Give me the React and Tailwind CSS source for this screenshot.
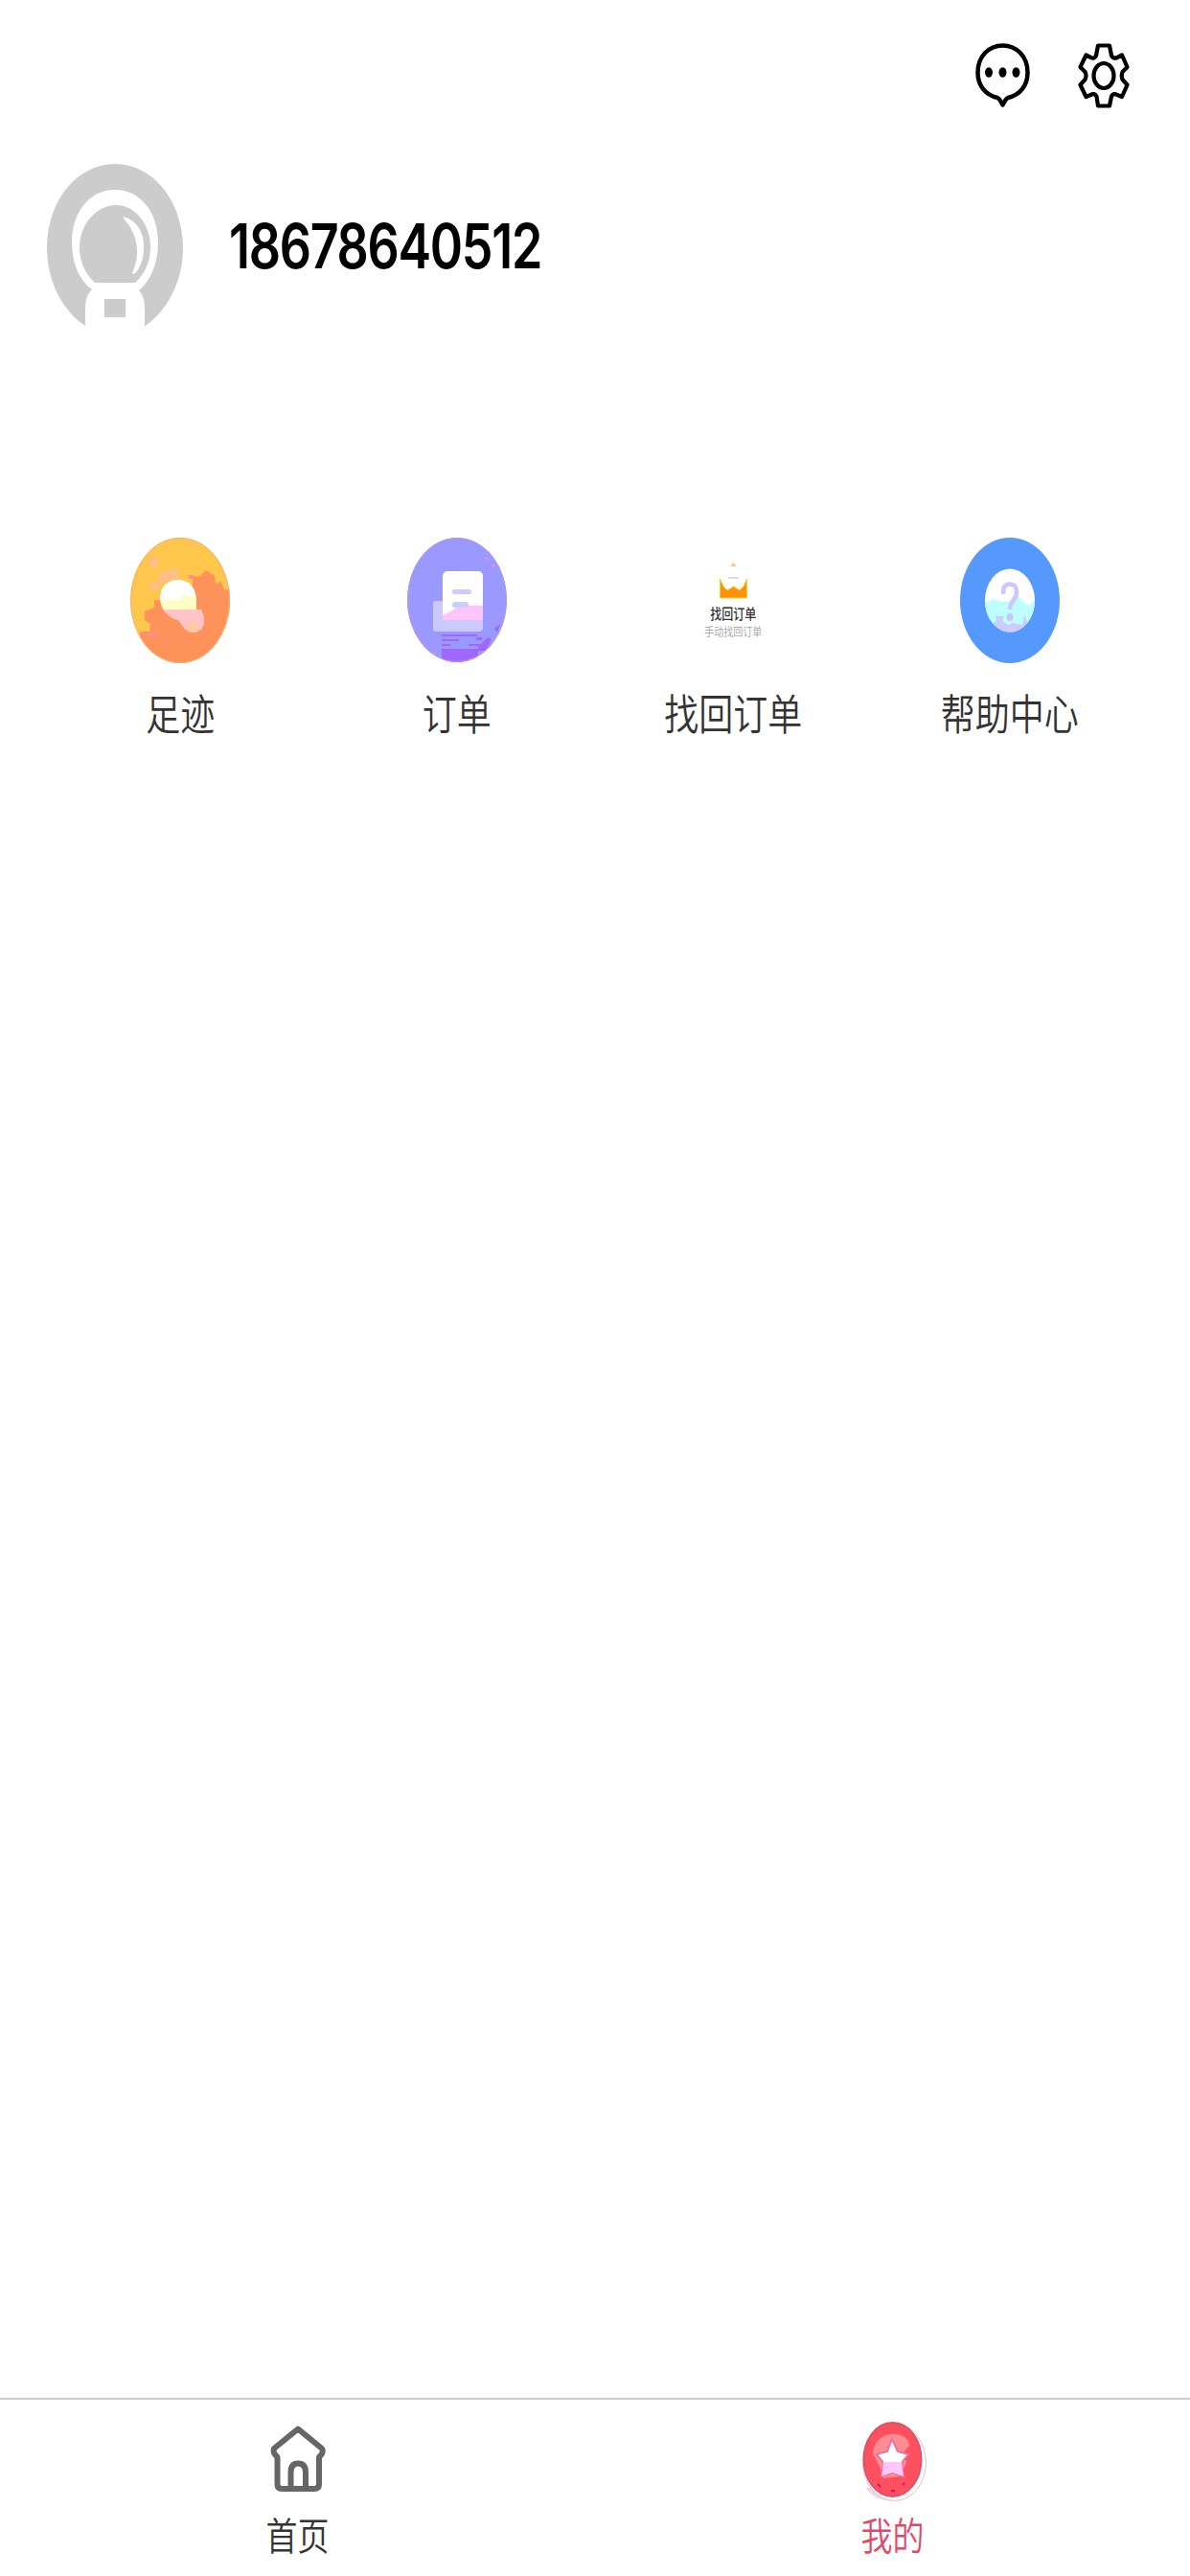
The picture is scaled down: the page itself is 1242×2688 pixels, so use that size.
const ChatIcon = () => (
    <svg viewBox="0 0 57 68" className="w-[57px] h-[68px]" fill="none" stroke="black" strokeWidth="4.5" strokeLinejoin="round">
        <path d="M23 57 C10 54 2.5 44 2.5 30.5 C2.5 14 14 2.5 28.5 2.5 S54.5 14 54.5 30.5 C54.5 44 47 54 34 57 C31.5 58 31 60 28.5 64.5 C26 60 25.5 58 23 57Z" />
        <g fill="black" stroke="none">
            <ellipse cx="14" cy="30.5" rx="4" ry="5.2" />
            <ellipse cx="28.5" cy="30.5" rx="4" ry="5.2" />
            <ellipse cx="42.5" cy="30.5" rx="4" ry="5.2" />
        </g>
    </svg>
);

const GearIcon = () => (
    <svg viewBox="0 0 54 68" className="w-[54px] h-[68px]" fill="none" stroke="black" strokeWidth="4.2" strokeLinejoin="round">
        <path d="M21 2.5 H33 L35 13 Q37 17 41 15 L46 12.5 L51.5 25 L46.5 30 Q45 34 46.5 38 L51.5 43.5 L46 56 L41 54 Q37 51.5 35 55.5 L33 65.5 H21 L19.5 55.5 Q17 51.5 13.5 54 L8.5 56 L2.5 43.5 L7.5 38 Q9.5 34 7.5 30 L2.5 25 L8.5 12.5 L13.5 15 Q17 17 19 13Z" />
        <ellipse cx="27" cy="34" rx="10.5" ry="13" />
    </svg>
);

const Avatar = () => (
    <svg viewBox="0 0 142 170" className="w-[142px] h-[170px]">
        <path fill="#cccccc" d="M71 0 C110 0 142 38 142 88 C142 123 125 154 102 169.5 V149 Q102 139 96 132 C109 121 116 103 116 82 C116 50 97 27 71 27 S26 50 26 82 C26 103 34 122 47 131 Q40 138 40 149 V169 C17 154 0 123 0 88 C0 38 32 0 71 0Z" />
        <path fill="#cccccc" d="M72 43 C92 43 108 63 108 87 C108 103 101 116 92 124 H50 C40 115 34 102 34 87 C34 63 52 43 72 43Z" />
        <path fill="white" d="M80 55 C94 59 101 71 101 86 C101 99 98 109 91 115 L89 114 C98 95 95 73 80 57Z" />
        <rect x="60" y="141" width="22" height="19" fill="#cccccc" />
    </svg>
);

const FootprintIcon = () => (
    <svg viewBox="0 0 104 131" className="w-[104px] h-[131px]">
        <defs>
            <clipPath id="foot"><ellipse cx="52" cy="65.5" rx="52" ry="65.5" /></clipPath>
            <clipPath id="blob"><path d="M50 44 C62 44 69 53 69 66 C69 71 77 75 77 86 C77 94 73 99 66 99 C56 99 54 90 50 86 C39 84 31 74 31 63 C31 51 39 44 50 44Z" /></clipPath>
        </defs>
        <g clipPath="url(#foot)">
            <rect width="104" height="131" fill="#ffc64c" />
            <path fill="#ff925a" d="M104 53 L98 55 L95 46 L89 48 L88 40 L79 34 L73 40 L65 41 L65 50 L53 44 L31 57 V65 H25 V73 L15 77 V86 L21 90 L20 98 H10 V107 L30 131 H104Z" />
            <path fill="#ffbf86" d="M23 18 L30 24 L27 33 L18 27Z M20 48 L28 46 L32 36 L43 33 H51 V43 L34 46 L28 55 L20 54Z" />
            <path fill="#ff8e86" d="M61 39 H66 V43 H61Z M18 99 H28 V103 H18Z" />
        </g>
        <g clipPath="url(#blob)">
            <rect width="104" height="66" fill="white" />
            <path fill="#ffffc4" d="M30 65 H53 V61 H69 V77 H30Z" />
            <rect y="75" width="104" height="30" fill="#ffc4c6" />
            <path fill="#ffc99b" d="M60 89 H70 V99 H60Z" />
        </g>
        <ellipse cx="52" cy="65.5" rx="51.5" ry="65" fill="none" stroke="#f0b27d" />
    </svg>
);

const OrderIcon = () => (
    <svg viewBox="0 0 104 131" className="w-[104px] h-[131px]">
        <defs>
            <clipPath id="order"><ellipse cx="52" cy="65" rx="52" ry="65" /></clipPath>
        </defs>
        <g clipPath="url(#order)">
            <rect width="104" height="131" fill="#9999ff" />
            <path fill="#a066ff" d="M36 116 H74 V131 H36Z M36 101 H73 V103 H36Z M36 106 H54 V108 H36Z M36 111 H45 V113 H36Z M64 111 H77 L84 104 L88 106 L82 118 H74 V113 H64Z M72 104 H78 V107 H72Z M91 95 L97 90 L94 99Z" />
            <path fill="#c596ef" d="M81 20 H85 V24 H81Z M88 27 H92 V31 H88Z M84 14 H87 V17Z" />
        </g>
        <rect x="27" y="66" width="20" height="32" rx="3" fill="#c9c9ff" />
        <rect x="37" y="35" width="42" height="63" rx="5" fill="white" />
        <path fill="#ffc5fa" d="M37 81 L47 76 L54 71 H79 V93 Q79 98 74 98 H37Z" />
        <path fill="#cbcaff" d="M37 86 H79 V93 Q79 98 74 98 H37Z" />
        <rect x="47" y="54" width="20" height="5" rx="2" fill="#ccccff" />
        <rect x="47" y="67" width="17" height="6" rx="3" fill="#ccccff" />
        <ellipse cx="52" cy="65" rx="51.5" ry="64.5" fill="none" stroke="#bd96e6" />
    </svg>
);

const FindOrderIcon = () => (
    <div className="w-[104px] h-[131px] flex flex-col items-center pt-[25px] whitespace-nowrap">
        <svg viewBox="0 0 29 40" className="w-[29px] h-[40px]">
            <path fill="#e9cc91" d="M11 5 L14.5 1 L18 5Z" />
            <path fill="#ff9200" stroke="#ffc93c" d="M0.5 18 L4 26 L8 30 L14.5 26 L21 30 L25 26 L28.5 18 V38 H0.5Z" />
            <path stroke="#b9b9b9" d="M9 17 H20" />
        </svg>
        <span className="mt-[7px] text-[12px] leading-[14px] font-medium text-[#333333] scale-y-[1.25]">找回订单</span>
        <span className="mt-[5px] text-[10px] leading-[14px] text-[#aaaaaa] scale-y-[1.2]">手动找回订单</span>
    </div>
);

const HelpIcon = () => (
    <svg viewBox="0 0 104 131" className="w-[104px] h-[131px]">
        <defs>
            <clipPath id="help"><ellipse cx="52" cy="65.5" rx="26" ry="33" /></clipPath>
        </defs>
        <ellipse cx="52" cy="65.5" rx="52" ry="65.5" fill="#5599ff" />
        <g clipPath="url(#help)">
            <rect width="104" height="131" fill="white" />
            <path fill="#bdffff" d="M26 68 L34 64 L44 67 L55 66 L60 60 L66 67 L72 71 L78 65 V100 H26Z" />
            <path fill="#ccccff" d="M34 90 L38 86 L37 82 L46 82 L44 87 L50 91 L56 89 L65 91 L67 80 L70 88 L77 88 V100 H34Z" />
        </g>
        <path d="M45.5 59 C44 52 47 48.5 52 48.5 C57 48.5 59 52 59 57 C59 65 52 66 52 75" fill="none" stroke="#ccc8ff" strokeWidth="4.5" />
        <ellipse cx="52" cy="83" rx="3.5" ry="4" fill="#ccc4ff" />
    </svg>
);

const HomeIcon = () => (
    <svg viewBox="0 0 58 70" className="w-[58px] h-[70px]" fill="none" stroke="#666666" strokeWidth="6" strokeLinejoin="round">
        <path d="M29 3.5 L4 24 Q3 27 4.5 29.5 L7.5 33 V61 Q7.5 66 12 66 H46 Q51 66 51 61 V33 L54 29.5 Q55.5 26 54 24Z" />
        <path d="M21.5 66 V49 Q21.5 39.5 29 39.5 Q37 39.5 37 49 V66" />
    </svg>
);

const StarIcon = () => (
    <svg viewBox="0 0 72 88" className="w-[72px] h-[88px]">
        <defs>
            <clipPath id="star"><path d="M35 19 L41 32 L52 35 L45 44 L47 58 L35 54 L24 58 L26 44 L19 35 L30 32Z" /></clipPath>
        </defs>
        <path d="M8 70 C18 88 52 88 62 70Z" fill="#f9d5e0" />
        <ellipse cx="37.5" cy="43.5" rx="33" ry="40" fill="white" stroke="#dfc0ce" />
        <ellipse cx="35.5" cy="40.5" rx="30" ry="38.5" fill="#ff5060" stroke="#db5367" strokeWidth="2" />
        <path d="M15 34 C16 22 24 14 36 14 C45 14 53 18 53 26 L48 32 L50 44 L43 58 L26 60 L22 48Z" fill="#ff8c92" />
        <path d="M35 19 L41 32 L52 35 L45 44 L47 58 L35 54 L24 58 L26 44 L19 35 L30 32Z" fill="white" stroke="#e873a2" strokeWidth="2" />
        <rect x="20" y="43" width="32" height="18" fill="#ffc7fa" clipPath="url(#star)" />
        <path d="M20 66 L23 69 M34 73 H38 M46 67 L48 65" stroke="#f00074" strokeWidth="2" />
    </svg>
);

const shortcuts = [
    { label: "足迹", Icon: FootprintIcon },
    { label: "订单", Icon: OrderIcon },
    { label: "找回订单", Icon: FindOrderIcon },
    { label: "帮助中心", Icon: HelpIcon },
];

const Shortcut = ({ label, Icon }) => (
    <button className="flex flex-col items-center">
        <Icon />
        <span className="mt-[26px] text-[36px] leading-[48px] font-[350] text-[#333333] whitespace-nowrap scale-y-[1.22]">{label}</span>
    </button>
);

export default function App() {
    return (
        <div className="h-[2688px] w-[1242px] bg-white flex flex-col overflow-hidden font-['Noto_Sans_CJK_SC',sans-serif]">
            <header className="flex justify-end gap-[50px] pt-[45px] pr-[63px]">
                <ChatIcon />
                <GearIcon />
            </header>

            <section className="flex items-center pl-[49px] mt-[58px]">
                <Avatar />
                <h1 className="ml-[48px] mt-[2px] text-[52px] leading-none font-semibold text-black tracking-[-1.3px] font-['Inter',sans-serif] scale-y-[1.25]">
                    18678640512
                </h1>
            </section>

            <section className="grid grid-cols-4 px-[44px] mt-[220px]">
                {shortcuts.map((item) => (
                    <Shortcut key={item.label} {...item} />
                ))}
            </section>

            <nav className="mt-auto h-[186px] border-t-2 border-[#cccccc] grid grid-cols-2">
                <button className="flex flex-col items-center pt-[27px]">
                    <HomeIcon />
                    <span className="mt-[19px] text-[33px] leading-[48px] font-[350] text-[#333333] scale-y-[1.22]">首页</span>
                </button>
                <button className="flex flex-col items-center pt-[22px]">
                    <StarIcon />
                    <span className="mt-[6px] text-[33px] leading-[48px] font-[350] text-[#e04a68] scale-y-[1.22]">我的</span>
                </button>
            </nav>
        </div>
    );
}
